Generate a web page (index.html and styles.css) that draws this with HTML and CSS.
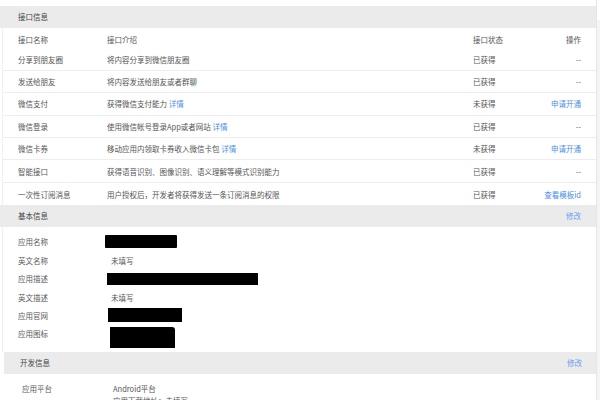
FILE: index.html
```html
<!DOCTYPE html>
<html lang="zh-CN">
<head>
<meta charset="utf-8">
<title>应用详情</title>
<link rel="stylesheet" href="styles.css">
</head>
<body>
<div class="page">
  <div class="main">
    <section class="panel p1">
      <div class="band"><span class="band-title">接口信息</span></div>
      <div class="tbody">
        <div class="row head"><span>接口名称</span><span>接口介绍</span><span>接口状态</span><span class="op">操作</span></div>
        <div class="row line"><span>分享到朋友圈</span><span>将内容分享到微信朋友圈</span><span>已获得</span><span class="op">--</span></div>
        <div class="row line"><span>发送给朋友</span><span>将内容发送给朋友或者群聊</span><span>已获得</span><span class="op">--</span></div>
        <div class="row line"><span>微信支付</span><span>获得微信支付能力 <a class="link">详情</a></span><span>未获得</span><span class="op"><a class="link">申请开通</a></span></div>
        <div class="row line"><span>微信登录</span><span>使用微信帐号登录App或者网站 <a class="link">详情</a></span><span>已获得</span><span class="op">--</span></div>
        <div class="row line"><span>微信卡券</span><span>移动应用内领取卡券收入微信卡包 <a class="link">详情</a></span><span>未获得</span><span class="op"><a class="link">申请开通</a></span></div>
        <div class="row line"><span>智能接口</span><span>获得语音识别、图像识别、语义理解等模式识别能力</span><span>已获得</span><span class="op">--</span></div>
        <div class="row"><span>一次性订阅消息</span><span>用户授权后，开发者将获得发送一条订阅消息的权限</span><span>已获得</span><span class="op"><a class="link">查看模板id</a></span></div>
      </div>
      <div class="band"><span class="band-title">基本信息</span><a class="link">修改</a></div>
      <div class="info">
        <div class="irow"><span class="lbl">应用名称</span><span class="redact r-name"></span></div>
        <div class="irow"><span class="lbl">英文名称</span><span class="val">未填写</span></div>
        <div class="irow"><span class="lbl">应用描述</span><span class="redact r-desc"></span></div>
        <div class="irow"><span class="lbl">英文描述</span><span class="val">未填写</span></div>
        <div class="irow"><span class="lbl">应用官网</span><span class="redact r-site"></span></div>
        <div class="irow top"><span class="lbl">应用图标</span><span class="redact r-icon"></span></div>
      </div>
    </section>
    <section class="panel p2">
      <div class="band b2"><span class="band-title">开发信息</span><a class="link">修改</a></div>
      <div class="info2">
        <div class="irow2"><span class="lbl">应用平台</span><span class="val2"><span class="vline">Android平台</span><span class="vline">应用下载地址：未填写</span></span></div>
      </div>
    </section>
  </div>
  <div class="gutter"></div>
</div>
</body>
</html>
```

FILE: styles.css
```css
* { box-sizing: border-box; }
html, body { margin: 0; padding: 0; background: #fff; }
body {
  font-family: "Noto Sans CJK SC", "Noto Sans", sans-serif;
  font-size: 7.5px;
  color: #555;
  width: 600px;
  height: 400px;
  overflow: hidden;
}
.page { display: flex; height: 400px; }
.main { width: 597px; padding-top: 6px; border-right: 1px solid #e6e6e6; }
.gutter { flex: 1; background: #f4f4f4; margin-top: 20px; }
a.link { color: #4d8fe6; text-decoration: none; }

.band {
  height: 21.5px;
  background: #ebebeb;
  display: flex;
  align-items: center;
  justify-content: space-between;
  padding: 0 15px 0 18px;
}
.band-title { color: #444; }
.band .link { color: #6a9ff0; }

.tbody { margin-left: 2px; border-left: 1px solid #f0f0f0; }
.row {
  display: grid;
  grid-template-columns: 89px 366px 60px 1fr;
  align-items: center;
  height: 22.4px;
  padding: 0 15px 0 15px;
}
.row.head { height: 21px; padding-top: 2px; }
.row.line { border-bottom: 1px solid #ededed; }
.row .op { text-align: right; }

.info { margin-left: 2px; border-left: 1px solid #f0f0f0; padding: 6px 0 4px 15px; }
.irow { display: flex; align-items: center; height: 18.4px; }
.irow.top { align-items: flex-start; height: 23px; }
.irow.top .lbl { line-height: 18.4px; }
.lbl { width: 89px; flex-shrink: 0; color: #5a5a5a; }
.val { padding-left: 4px; color: #555; }
.redact { display: inline-block; background: #000; }
.r-name { width: 72px; height: 13px; margin-left: -2px; border-radius: 1px; }
.r-desc { width: 151px; height: 12px; }
.r-site { width: 74px; height: 14px; margin-left: 1px; }
.r-icon { width: 65px; height: 21px; margin-left: 3px; margin-top: 2px; border-radius: 0 3px 0 0; }

.p2 { margin-left: 4px; }
.band.b2 { padding: 0 14px 0 16px; height: 22px; }
.info2 { padding: 9px 0 0 18px; }
.irow2 { display: flex; align-items: flex-start; }
.irow2 .lbl { width: 91px; line-height: 12px; }
.val2 { display: flex; flex-direction: column; }
.vline { line-height: 12px; color: #555; }
```
